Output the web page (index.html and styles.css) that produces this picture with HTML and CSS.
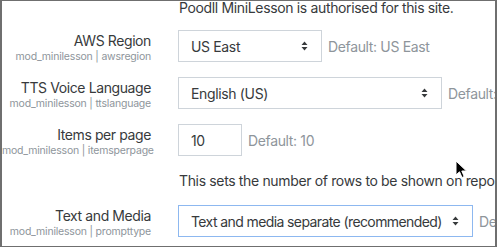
FILE: index.html
```html
<!DOCTYPE html>
<html lang="en">
<head>
    <meta charset="UTF-8">
    <meta name="viewport" content="width=device-width, initial-scale=1.0">
    <title>MiniLesson settings</title>
    <link rel="stylesheet" href="styles.css">
</head>
<body>
    <div class="frame">
        <div class="settings">
            <div class="setting setting-intro">
                <div class="setting-label"></div>
                <div class="setting-body">
                    <p class="intro">Poodll MiniLesson is authorised for this site.</p>
                </div>
            </div>

            <div class="setting">
                <div class="setting-label">
                    <div class="title">AWS Region</div>
                    <div class="name">mod_minilesson | awsregion</div>
                </div>
                <div class="setting-body">
                    <div class="control">
                        <div class="select select-region">
                            <span>US East</span>
                            <svg class="caret" width="7" height="10" viewBox="0 0 7 10"><path d="M3.5 0.5 L6.5 4 H0.5 Z M3.5 9.5 L6.5 6 H0.5 Z" fill="#373a3c"/></svg>
                        </div>
                        <span class="default">Default: US East</span>
                    </div>
                </div>
            </div>

            <div class="setting">
                <div class="setting-label">
                    <div class="title">TTS Voice Language</div>
                    <div class="name">mod_minilesson | ttslanguage</div>
                </div>
                <div class="setting-body">
                    <div class="control">
                        <div class="select select-language">
                            <span>English (US)</span>
                            <svg class="caret" width="7" height="10" viewBox="0 0 7 10"><path d="M3.5 0.5 L6.5 4 H0.5 Z M3.5 9.5 L6.5 6 H0.5 Z" fill="#373a3c"/></svg>
                        </div>
                        <span class="default">Default: English (US)</span>
                    </div>
                </div>
            </div>

            <div class="setting">
                <div class="setting-label">
                    <div class="title">Items per page</div>
                    <div class="name">mod_minilesson | itemsperpage</div>
                </div>
                <div class="setting-body">
                    <div class="control">
                        <div class="input">10</div>
                        <span class="default">Default: 10</span>
                    </div>
                    <p class="description">This sets the number of rows to be shown on reports pages.</p>
                </div>
            </div>

            <div class="setting">
                <div class="setting-label">
                    <div class="title">Text and Media</div>
                    <div class="name">mod_minilesson | prompttype</div>
                </div>
                <div class="setting-body">
                    <div class="control">
                        <div class="select select-prompt focused">
                            <span>Text and media separate (recommended)</span>
                            <svg class="caret" width="7" height="10" viewBox="0 0 7 10"><path d="M3.5 0.5 L6.5 4 H0.5 Z M3.5 9.5 L6.5 6 H0.5 Z" fill="#373a3c"/></svg>
                        </div>
                        <span class="default">Default: Text and media separate</span>
                    </div>
                </div>
            </div>
        </div>

        <svg class="pointer" width="14" height="20" viewBox="0 0 14 20">
            <path d="M1 1 L1 15 L4.5 11.8 L7 17.5 L9.2 16.5 L6.8 11 L11.5 11 Z" fill="#000" stroke="#fff" stroke-width="1"/>
        </svg>
    </div>
</body>
</html>
```

FILE: styles.css
```css
html, body {
    margin: 0;
    padding: 0;
}
body {
    font-family: Inter, "Liberation Sans", sans-serif;
    color: #373a3c;
    background: white;
    letter-spacing: -0.35px;
}
.frame {
    position: relative;
    width: 497px;
    height: 247px;
    box-sizing: border-box;
    border-top: 1px solid #6f6f6f;
    border-left: 2px solid #6f6f6f;
    border-right: 2px solid #6f6f6f;
    border-bottom: 1px solid #6f6f6f;
    overflow: hidden;
}
.settings {
    margin-top: -4px;
}
.setting {
    display: grid;
    grid-template-columns: 149px 1fr;
    column-gap: 27px;
    margin-bottom: 15px;
}
.setting-intro {
    margin-bottom: 11px;
}
.setting-label {
    text-align: right;
    padding-top: 1px;
    white-space: nowrap;
}
.title {
    font-size: 14px;
    line-height: 20px;
    letter-spacing: -0.4px;
}
.name {
    font-size: 10.5px;
    line-height: 11px;
    color: #8e959b;
    letter-spacing: -0.2px;
}
.setting-body {
    min-width: 0;
}
.intro {
    margin: 0;
    font-size: 14px;
    line-height: 22px;
    white-space: nowrap;
    padding-left: 1px;
}
.control {
    display: flex;
    align-items: center;
    gap: 6px;
    white-space: nowrap;
}
.select, .input {
    height: 32px;
    box-sizing: border-box;
    border: 1px solid #ced4da;
    display: flex;
    align-items: center;
    font-size: 14px;
    flex-shrink: 0;
}
.select {
    justify-content: space-between;
    padding: 0 13px 0 12px;
}
.select-region {
    width: 144px;
}
.select-language {
    width: 264px;
}
.select-prompt {
    width: 295px;
}
.select-prompt span {
    letter-spacing: -0.6px;
}
.select.focused {
    border-color: #8db8f0;
}
.input {
    width: 64px;
    padding-left: 12px;
}
.caret {
    display: block;
}
.default {
    font-size: 14px;
    color: #8e959b;
}
.description {
    margin: 16px 0 0;
    font-size: 14px;
    line-height: 18px;
    white-space: nowrap;
    padding-left: 1px;
}
.pointer {
    position: absolute;
    left: 453px;
    top: 159px;
}
```
